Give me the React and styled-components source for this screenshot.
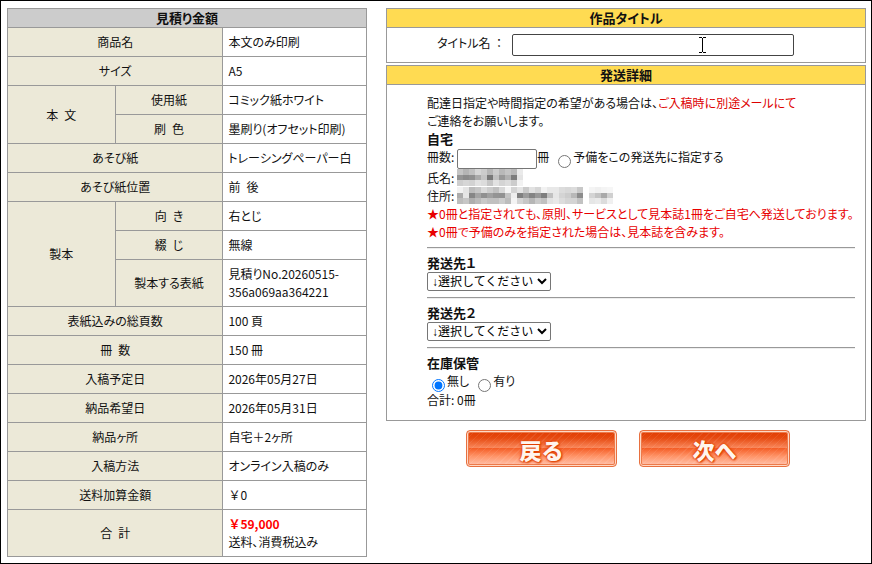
import React, { useState } from "react";
import styled, { createGlobalStyle } from "styled-components";

const Theme = {
  linea: "#999999",
  beige: "#ece9d8",
  gris: "#cccccc",
  amarillo: "#ffdb52",
  texto: "#111111",
  rojo: "#dd0000",
};

// one grey value per tile, "" leaves the tile empty
const mosaicName = [
  ["c4", "b4", "c0", "d6", "cc", "b6", "cc", "b8", "c4", "b8", "ea"],
  ["94", "8a", "90", "aa", "c4", "78", "c0", "98", "b0", "7c", "e4"],
  ["ce", "d6", "d2", "e2", "dc", "c6", "e2", "d4", "dc", "cc", "f2"],
];
const mosaicAddress = [
  ["f2", "e4", "bc", "c6", "da", "cc", "c0", "d8", "f4", "d4", "e4", "ca", "e2", "d6", "f2", "e8", "e8", "dc", "d8", "dc", "c8", "", "f4", "f0", "f4", "f6"],
  ["ac", "e6", "86", "a4", "90", "a0", "94", "92", "c4", "ee", "80", "9c", "84", "98", "7e", "c0", "e6", "d4", "cc", "b8", "8c", "", "d4", "c4", "aa", "d0"],
  ["bc", "c6", "ae", "ba", "c8", "c0", "c0", "cc", "bc", "f4", "d4", "c6", "b6", "ca", "c0", "e2", "e8", "dc", "d4", "d4", "c2", "", "e6", "ea", "dc", "f0"],
];

function Mosaico({ filas }) {
  const ancho = filas[0].length * 6;
  return (
    <svg width={ancho} height="17" viewBox={`0 0 ${ancho} 18`} preserveAspectRatio="none" shapeRendering="crispEdges" aria-hidden="true">
      {filas.map((fila, y) =>
        fila.map(
          (g, x) =>
            g && <rect key={`${x}-${y}`} x={x * 6} y={y * 6} width="6" height="6" fill={`#${g}${g}${g}`} />
        )
      )}
    </svg>
  );
}

function Destino({ id, titulo }) {
  return (
    <>
      <Subtitulo htmlFor={id}>{titulo}</Subtitulo>
      <Lista id={id}>
        <option>↓選択してください</option>
      </Lista>
    </>
  );
}

function Fila({ nombre, children }) {
  return (
    <tr>
      <Etiqueta scope="row" colSpan={2}>
        {nombre}
      </Etiqueta>
      <Valor>{children}</Valor>
    </tr>
  );
}

export default function App() {
  const [titulo, setTitulo] = useState("");
  const [cantidad, setCantidad] = useState("");
  const [stock, setStock] = useState("no");

  return (
    <>
      <GlobalStyle />
      <Pagina>
        <Tabla>
          <colgroup>
            <Columna $ancho="30%" />
            <Columna $ancho="30%" />
            <Columna $ancho="40%" />
          </colgroup>
          <thead>
            <tr>
              <Cabecera colSpan={3}>見積り金額</Cabecera>
            </tr>
          </thead>
          <tbody>
            <Fila nombre="商品名">本文のみ印刷</Fila>
            <Fila nombre="サイズ">A5</Fila>
            <tr>
              <Etiqueta scope="rowgroup" rowSpan={2}>本{"\u2002"}文</Etiqueta>
              <Etiqueta scope="row">使用紙</Etiqueta>
              <Valor>コミック紙ホワイト</Valor>
            </tr>
            <tr>
              <Etiqueta scope="row">刷{"\u2002"}色</Etiqueta>
              <Valor>墨刷り(オフセット印刷)</Valor>
            </tr>
            <Fila nombre="あそび紙">トレーシングペーパー白</Fila>
            <Fila nombre="あそび紙位置">前{"\u2002"}後</Fila>
            <tr>
              <Etiqueta scope="rowgroup" rowSpan={3}>製本</Etiqueta>
              <Etiqueta scope="row">向{"\u2002"}き</Etiqueta>
              <Valor>右とじ</Valor>
            </tr>
            <tr>
              <Etiqueta scope="row">綴{"\u2002"}じ</Etiqueta>
              <Valor>無線</Valor>
            </tr>
            <tr>
              <Etiqueta scope="row">製本する表紙</Etiqueta>
              <Valor>
                見積りNo.20260515-
                <br />
                356a069aa364221
              </Valor>
            </tr>
            <Fila nombre="表紙込みの総頁数">100 頁</Fila>
            <Fila nombre={"冊\u2002数"}>150 冊</Fila>
            <Fila nombre="入稿予定日">2026年05月27日</Fila>
            <Fila nombre="納品希望日">2026年05月31日</Fila>
            <Fila nombre="納品ヶ所">自宅＋2ヶ所</Fila>
            <Fila nombre="入稿方法">オンライン入稿のみ</Fila>
            <Fila nombre="送料加算金額">
              <Importe>￥0</Importe>
            </Fila>
            <Fila nombre={"合\u2002計"}>
              <Total>￥59,000</Total>
              <br />
              送料、消費税込み
            </Fila>
          </tbody>
        </Tabla>

        <Formulario onSubmit={(e) => e.preventDefault()}>
          <Panel>
            <TituloPanel>作品タイトル</TituloPanel>
            <CajaTitulo>
              <EtiquetaTitulo htmlFor="titulo">タイトル名 &nbsp;：</EtiquetaTitulo>
              <CampoTitulo>
                <InputTitulo id="titulo" value={titulo} onChange={(e) => setTitulo(e.target.value)} />
                <Cursor width="8" height="17" viewBox="0 0 8 17" aria-hidden="true">
                  <path d="M0 .5h3M4 .5h3M0 15.5h3M4 15.5h3M3.5 1v14" stroke="#000" fill="none" />
                </Cursor>
              </CampoTitulo>
            </CajaTitulo>
          </Panel>

          <Panel>
            <TituloPanel>発送詳細</TituloPanel>
            <CajaEnvio>
              <Parrafo>
                配達日指定や時間指定の希望がある場合は、<Rojo>ご入稿時に別途メールにて</Rojo>
                <br />
                ご連絡をお願いします。
              </Parrafo>
              <Subtitulo as="h3">自宅</Subtitulo>
              <Linea>
                <label htmlFor="cantidad">冊数:</label>
                <InputCantidad id="cantidad" value={cantidad} onChange={(e) => setCantidad(e.target.value)} />
                冊
                <Opcion $margen="4px">
                  <Radio type="radio" name="reserva" />
                  予備をこの発送先に指定する
                </Opcion>
              </Linea>
              <Dato>
                氏名:
                <Mosaico filas={mosaicName} />
              </Dato>
              <Dato>
                住所:
                <Mosaico filas={mosaicAddress} />
              </Dato>
              <Aviso>
                ★0冊と指定されても、原則、サービスとして見本誌1冊をご自宅へ発送しております。
                <br />
                ★0冊で予備のみを指定された場合は、見本誌を含みます。
              </Aviso>
              <Separador />
              <Destino id="destino1" titulo="発送先１" />
              <Separador />
              <Destino id="destino2" titulo="発送先２" />
              <Separador />
              <Subtitulo as="h3">在庫保管</Subtitulo>
              <Opciones>
                <Opcion>
                  <Radio type="radio" name="stock" checked={stock === "no"} onChange={() => setStock("no")} />
                  無し
                </Opcion>
                <Opcion>
                  <Radio type="radio" name="stock" checked={stock === "si"} onChange={() => setStock("si")} />
                  有り
                </Opcion>
              </Opciones>
              <Parrafo>合計:&nbsp;0冊</Parrafo>
            </CajaEnvio>
          </Panel>

          <Botones>
            <Boton type="button">戻る</Boton>
            <Boton type="submit">次へ</Boton>
          </Botones>
        </Formulario>
      </Pagina>
    </>
  );
}

const GlobalStyle = createGlobalStyle`
  * {
    box-sizing: border-box;
  }
  body {
    margin: 0;
    background: #fff;
    color: ${Theme.texto};
    font-family: "Noto Sans CJK JP", sans-serif;
    font-size: 12px;
    line-height: 18px;
    font-feature-settings: "palt";
  }
`;
const Pagina = styled.main`
  display: grid;
  grid-template-columns: 3fr 4fr;
  align-items: start;
  gap: 19px;
  padding: 7px 5px 6px 6px;
  border: 1px solid #000;
`;
const Tabla = styled.table`
  width: 100%;
  table-layout: fixed;
  border-collapse: collapse;
`;
const Columna = styled.col`
  width: ${(p) => p.$ancho};
`;
const Cabecera = styled.th`
  padding: 0;
  border: 1px solid ${Theme.linea};
  background: ${Theme.gris};
  font-size: 13px;
`;
const Etiqueta = styled.th`
  padding: 5px;
  border: 1px solid ${Theme.linea};
  background: ${Theme.beige};
  font-weight: normal;
`;
const Valor = styled.td`
  padding: 5px;
  border: 1px solid ${Theme.linea};
`;
const Importe = styled.span`
  font-feature-settings: normal;
`;
const Total = styled.strong`
  color: #ff0000;
  font-feature-settings: normal;
`;
const Formulario = styled.form`
  display: flex;
  flex-direction: column;
  gap: 2px;
`;
const Panel = styled.section`
  border: 1px solid ${Theme.linea};
`;
const TituloPanel = styled.h2`
  margin: 0;
  border-bottom: 1px solid ${Theme.linea};
  background: ${Theme.amarillo};
  font-size: 13px;
  line-height: 18px;
  text-align: center;
`;
const CajaTitulo = styled.div`
  display: flex;
  padding: 6px 71px 6px 50px;
`;
const EtiquetaTitulo = styled.label`
  width: 75px;
`;
const CampoTitulo = styled.div`
  flex: 1;
  display: flex;
  position: relative;
`;
const InputTitulo = styled.input`
  width: 100%;
  height: 22px;
  padding: 1px 2px;
  border: 1px solid #444;
  border-radius: 2px;
  font: inherit;
`;
const Cursor = styled.svg`
  position: absolute;
  top: 3px;
  right: 87px;
`;
const CajaEnvio = styled.div`
  padding: 9px 10px 11px 40px;
`;
const Parrafo = styled.p`
  margin: 0;
  white-space: nowrap;
`;
const Aviso = styled(Parrafo)`
  color: #e80000;
`;
const Rojo = styled.span`
  color: ${Theme.rojo};
`;
const Subtitulo = styled.label`
  display: block;
  margin: 0;
  font-size: 13px;
  font-weight: bold;
  line-height: 18px;
`;
const Linea = styled.div`
  display: flex;
  height: 21px;
`;
const InputCantidad = styled.input`
  width: 80px;
  height: 20px;
  margin: 1px 0 0 3px;
  padding: 1px 2px;
  border: 1px solid #767676;
  border-radius: 2px;
  font: inherit;
`;
const Opcion = styled.label`
  display: flex;
  margin-left: ${(p) => p.$margen || "0"};
`;
const Radio = styled.input`
  width: 13px;
  height: 13px;
  margin: 7px 2px 0 5px;
`;
const Opciones = styled.div`
  display: flex;
  gap: 4px;
  height: 19px;
`;
const Dato = styled.div`
  display: flex;
  gap: 3px;
  height: 18px;
`;
const Separador = styled.hr`
  height: 2px;
  margin: 6px 0 5px;
  border: 0;
  border-top: 1px solid ${Theme.linea};
  border-bottom: 1px solid #eee;
`;
const Lista = styled.select`
  display: block;
  width: 124px;
  height: 19px;
  padding: 0;
  border: 1px solid #767676;
  border-radius: 2px;
  background-color: #fff;
  color: #000;
  font-family: "Liberation Sans", "Noto Sans CJK JP", sans-serif;
  font-size: 12px;
`;
const Botones = styled.div`
  display: flex;
  justify-content: center;
  gap: 22px;
  padding: 7px 0 0 4px;
`;
const Boton = styled.button`
  width: 151px;
  height: 37px;
  padding: 0;
  border: 1px solid #e8703f;
  border-radius: 4px;
  box-shadow: inset 0 0 0 1px #ffd9c6, inset 0 0 0 2px #ec7a4a;
  background:
    repeating-linear-gradient(135deg, rgba(255, 255, 255, 0.08) 0 1px, transparent 1px 5px),
    linear-gradient(#e03a00 0%, #e64a10 20%, #fa8a5e 49%, #f55f28 50%, #ff9468 72%, #ffc5b0 100%);
  color: #fff5ee;
  font-family: "Noto Sans CJK JP", sans-serif;
  font-size: 22px;
  font-weight: 900;
  line-height: 32px;
  text-shadow: 0 0 3px #e04000, 0 0 3px #e04000, 1px 1px 2px #e04000;
  cursor: pointer;
`;
